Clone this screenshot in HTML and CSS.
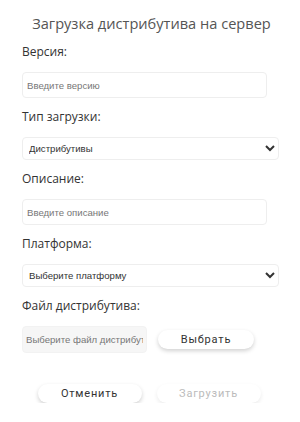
FILE: index.html
```html
<!DOCTYPE html>
<html lang="ru">
<head>
  <meta charset="UTF-8" />
  <meta name="viewport" content="width=device-width, initial-scale=1.0" />
  <title>Загрузка дистрибутива</title>
  <link rel="stylesheet" href="styles.css">
</head>
<body>

  <!-- Upload form -->
  <form class="upload-form">
    <h2 class="form-title">Загрузка дистрибутива на сервер</h2>

    <div class="field">
      <label for="version">Версия:</label>
      <input id="version" class="text-input" type="text" placeholder="Введите версию" />
    </div>

    <div class="field">
      <label for="type">Тип загрузки:</label>
      <select id="type" class="select-input">
        <option>Дистрибутивы</option>
      </select>
    </div>

    <div class="field">
      <label for="desc">Описание:</label>
      <input id="desc" class="text-input" type="text" placeholder="Введите описание" />
    </div>

    <div class="field">
      <label for="platform">Платформа:</label>
      <select id="platform" class="select-input">
        <option>Выберите платформу</option>
      </select>
    </div>

    <div class="field">
      <label for="file">Файл дистрибутива:</label>
      <div class="file-row">
        <input id="file" class="file-input" type="text" placeholder="Выберите файл дистрибутива" readonly />
        <button type="button" class="btn">Выбрать</button>
      </div>
    </div>

    <div class="actions">
      <button type="button" class="btn btn-wide">Отменить</button>
      <button type="button" class="btn btn-wide" disabled>Загрузить</button>
    </div>
  </form>

</body>
</html>
```

FILE: styles.css
```css
* { margin: 0; padding: 0; box-sizing: border-box; }
body {
  font-family: 'Open Sans', sans-serif;
  background-color: #fff;
  color: #333;
}

.upload-form {
  padding: 12px 21px 0 22px;
}
.form-title {
  font-size: 14.6px;
  line-height: 22px;
  font-weight: 400;
  color: #555;
  text-align: center;
  white-space: nowrap;
  margin-bottom: 10px;
  padding-left: 2px;
}

.field { margin-bottom: 11px; }
.field label {
  display: block;
  font-size: 12px;
  line-height: 16px;
  margin-bottom: 12px;
  color: #333;
}

.text-input,
.select-input,
.file-input {
  font-family: 'Liberation Sans', Arial, sans-serif;
  font-size: 9.6px;
  border: 1px solid #eee;
  border-radius: 4px;
  background: #fff;
  color: #333;
  outline: none;
}
.text-input {
  display: block;
  width: 245px;
  height: 26px;
  padding: 0 4px;
}
.text-input::placeholder,
.file-input::placeholder { color: #777; }

.select-input {
  display: block;
  width: 100%;
  height: 23px;
  padding: 0 2px;
}

.file-row {
  display: flex;
  align-items: center;
  gap: 11px;
}
.file-input {
  width: 125px;
  height: 27px;
  padding: 0 3px;
  background: #f6f6f6;
  border-color: #f2f2f2;
}

.btn {
  font-family: Roboto, sans-serif;
  font-size: 11px;
  font-weight: 400;
  letter-spacing: 0.8px;
  color: #333;
  background: #fff;
  border: none;
  border-radius: 10px;
  width: 96px;
  height: 19px;
  box-shadow: 0 2px 4px rgba(0, 0, 0, 0.18);
  cursor: pointer;
}
.btn:disabled {
  color: #bbb;
  box-shadow: 0 2px 4px rgba(0, 0, 0, 0.08);
  cursor: default;
}

.actions {
  display: flex;
  justify-content: center;
  gap: 15px;
  margin-top: 31px;
  padding-right: 3px;
}
.btn-wide { width: 104px; }
```
